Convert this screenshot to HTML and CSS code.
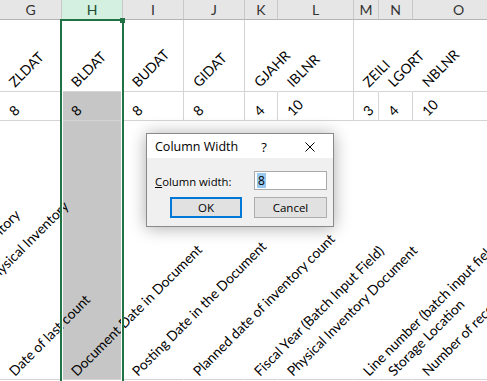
FILE: index.html
```html
<!DOCTYPE html>
<html lang="en">
<head>
    <meta charset="UTF-8">
    <title>Column Width</title>
    <link rel="stylesheet" href="styles.css">
</head>
<body>
<div class="page">
    <div class="grid">
        <div class="row head">
            <div class="hc">E</div><div class="hc">F</div>
            <div class="hc">G</div><div class="hc on">H</div><div class="hc">I</div><div class="hc">J</div>
            <div class="hc">K</div><div class="hc">L</div><div class="hc">M</div><div class="hc">N</div><div class="hc">O</div>
        </div>
        <div class="row r1">
            <div class="c"></div><div class="c"></div>
            <div class="c"><span>ZLDAT</span></div>
            <div class="c"><span>BLDAT</span></div>
            <div class="c"><span>BUDAT</span></div>
            <div class="c"><span>GIDAT</span></div>
            <div class="c open"><span>GJAHR</span></div>
            <div class="c"><span>IBLNR</span></div>
            <div class="c open"><span>ZEILI</span></div>
            <div class="c open"><span>LGORT</span></div>
            <div class="c"><span>NBLNR</span></div>
        </div>
        <div class="row r2">
            <div class="c"></div><div class="c"></div>
            <div class="c"><span>8</span></div>
            <div class="c sel"><span>8</span></div>
            <div class="c"><span>8</span></div>
            <div class="c"><span>8</span></div>
            <div class="c"><span>4</span></div>
            <div class="c"><span>10</span></div>
            <div class="c"><span>3</span></div>
            <div class="c"><span>4</span></div>
            <div class="c"><span>10</span></div>
        </div>
        <div class="row r3">
            <div class="c"><span class="tail e">Posting Block for Inventory</span></div>
            <div class="c"><span class="tail f">Count Date of Physical Inventory</span></div>
            <div class="c"><span>Date of last count</span></div>
            <div class="c sel"><span>Document Date in Document</span></div>
            <div class="c"><span>Posting Date in the Document</span></div>
            <div class="c"><span>Planned date of inventory count</span></div>
            <div class="c"><span>Fiscal Year (Batch Input Field)</span></div>
            <div class="c"><span>Physical Inventory Document</span></div>
            <div class="c"><span>Line number (batch input field)</span></div>
            <div class="c"><span>Storage Location</span></div>
            <div class="c"><span>Number of records</span></div>
        </div>
    </div>

    <div class="selbox"><i class="handle"></i></div>

    <div class="dialog">
        <div class="titlebar">
            <div class="title">Column Width</div>
            <div class="tbtn">?</div>
            <div class="tbtn">
                <svg width="10" height="10" viewBox="0 0 10 10">
                    <path d="M0.5 0.5L9.5 9.5M9.5 0.5L0.5 9.5" stroke="#000" stroke-width="1" fill="none"/>
                </svg>
            </div>
        </div>
        <div class="dbody">
            <div class="line">
                <label><u>C</u>olumn width:</label>
                <div class="input"><span class="hl">8</span></div>
            </div>
            <div class="btns">
                <div class="btn def">OK</div>
                <div class="btn">Cancel</div>
            </div>
        </div>
    </div>
</div>
</body>
</html>
```

FILE: styles.css
```css
*{
    margin:0;
    padding:0;
    box-sizing:border-box;
}
html,body{
    width:487px;
    height:381px;
    overflow:hidden;
    background:#fff;
}
.page{
    position:relative;
    width:487px;
    height:381px;
    overflow:hidden;
}
.grid{
    margin-left:-155px;
    width:660px;
}
.row{
    display:grid;
    grid-template-columns:40px 115px 62px 61px 61px 61px 33px 76px 25px 34px 92px;
}
/* column letters */
.head{
    height:20px;
}
.hc{
    background:#e6e6e6;
    border-right:1px solid #c8c8c8;
    border-bottom:1px solid #b4b4b4;
    font-family:"Lato","Liberation Sans",sans-serif;
    font-size:14px;
    color:#333;
    text-align:center;
    line-height:19px;
}
.hc.on{
    background:#d3f0e0;
    color:#1d4d33;
}
/* cells */
.c{
    display:flex;
    align-items:flex-end;
    padding:0 0 0 17px;
    border-right:1px solid #d4d4d4;
    border-bottom:1px solid #d4d4d4;
    font-family:"Lato","Liberation Sans",sans-serif;
    font-size:13.8px;
    color:#000;
}
.c span{
    display:block;
    flex-shrink:0;
    white-space:nowrap;
    line-height:16px;
    transform-origin:0 100%;
    transform:rotate(-45deg);
}
.r1{
    height:72px;
}
.r1 .c{
    padding-bottom:1px;
}
.r1 .open{
    border-right-color:transparent;
}
.r2{
    height:29px;
}
.r2 .c{
    padding-bottom:1px;
}
.r3{
    height:259px;
}
.r3 .c{
    border-right-color:transparent;
}
.c.sel{
    background:#c6c6c6;
}
.tail{
    text-align:right;
}
.tail.e{
    width:228px;
}
.tail.f{
    width:240px;
}
/* selected column frame */
.selbox{
    position:absolute;
    left:60px;
    top:19px;
    width:64px;
    height:370px;
    border:2px solid #217346;
    border-bottom:none;
    box-shadow:inset 1px 0 #fff,inset -1px 0 #fff;
}
.handle{
    position:absolute;
    top:-3px;
    right:-3px;
    width:5px;
    height:5px;
    background:#217346;
}
/* dialog */
.dialog{
    position:absolute;
    left:146px;
    top:133px;
    width:188px;
    height:94px;
    border:1px solid #8a8a8a;
    background:#f0f0f0;
    box-shadow:0 1px 16px rgba(0,0,0,0.33);
    font-family:"Open Sans","Noto Sans",sans-serif;
    font-size:11.5px;
    color:#000;
}
.titlebar{
    display:flex;
    height:24px;
    background:#fff;
}
.title{
    flex:1;
    padding:2px 0 0 8px;
    line-height:22px;
    font-size:12.5px;
}
.tbtn{
    width:46px;
    display:flex;
    align-items:center;
    justify-content:center;
    font-size:13px;
    padding-top:2px;
}
.dbody{
    padding:13px 6px 0 8px;
}
.line{
    display:flex;
    justify-content:space-between;
    align-items:center;
    height:19px;
}
.line label{
    font-size:11.3px;
    padding-top:1px;
}
.input{
    width:73px;
    height:19px;
    border:1px solid #a9a9a9;
    background:#fff;
    padding:1px 0 0 2px;
    line-height:15px;
}
.hl{
    display:inline-block;
    background:#99c9ef;
    padding:0 1px;
    font-size:12px;
}
.btns{
    display:flex;
    justify-content:flex-end;
    gap:12px;
    margin-top:7px;
}
.btn{
    width:73px;
    height:21px;
    border:1px solid #adadad;
    background:#e1e1e1;
    text-align:center;
    line-height:19px;
    font-size:11.5px;
}
.btn.def{
    width:72px;
    border:2px solid #0078d7;
    line-height:17px;
}
```
